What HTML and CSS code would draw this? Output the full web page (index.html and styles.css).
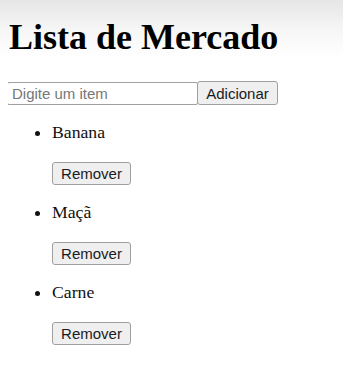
FILE: index.html
```html
<!DOCTYPE html>
<html lang="pt">
<head>
<meta charset="utf-8">
<title>Lista de Mercado</title>
<link rel="stylesheet" href="styles.css">
</head>
<body>
<h1 class="title">Lista de Mercado</h1>
<div class="add-row"><input class="item-input" type="text" placeholder="Digite um item"><button class="btn btn-add">Adicionar</button></div>
<ul class="list">
  <li class="item"><span class="item-name">Banana</span><div class="item-actions"><button class="btn btn-remove">Remover</button></div></li>
  <li class="item"><span class="item-name">Maçã</span><div class="item-actions"><button class="btn btn-remove">Remover</button></div></li>
  <li class="item"><span class="item-name">Carne</span><div class="item-actions"><button class="btn btn-remove">Remover</button></div></li>
</ul>
</body>
</html>
```

FILE: styles.css
```css
html {
  background: #ffffff linear-gradient(to bottom, #e6e6e6 0, #f6f6f6 30px, #ffffff 58px) no-repeat;
  min-height: 100%;
}
body {
  margin: 0 8px;
  font-family: "Liberation Serif", "Times New Roman", serif;
  font-size: 17.7px;
  color: #111;
}
.title {
  font-size: 36px;
  font-weight: bold;
  margin: 16px 0 23px 1px;
  line-height: normal;
  color: #000;
}
.add-row {
  display: flex;
  align-items: flex-end;
  margin-left: -1px;
}
.item-input {
  box-sizing: border-box;
  width: 191px;
  height: 23px;
  margin: 0;
  padding: 1px 4px;
  border: 1px solid #a0a0a0;
  border-radius: 2px;
  font-family: "Liberation Sans", Arial, sans-serif;
  font-size: 15px;
  color: #000;
  background: #fff;
}
.item-input::placeholder {
  color: #777777;
}
.btn {
  box-sizing: border-box;
  margin: 0;
  padding: 0 8px;
  border: 1px solid #a0a0a0;
  border-radius: 3px;
  background: #efefef;
  font-family: "Liberation Sans", Arial, sans-serif;
  font-size: 15px;
  color: #1a1a1a;
}
.btn-add {
  width: 81px;
  height: 24px;
  margin-left: -1px;
}
.list {
  margin: 17px 0 0;
  padding-left: 44px;
}
.item-name {
  display: block;
  line-height: 20px;
}
.item-actions {
  margin: 20px 0 17px;
}
.btn-remove {
  display: block;
  width: 79px;
  height: 23px;
}
```
